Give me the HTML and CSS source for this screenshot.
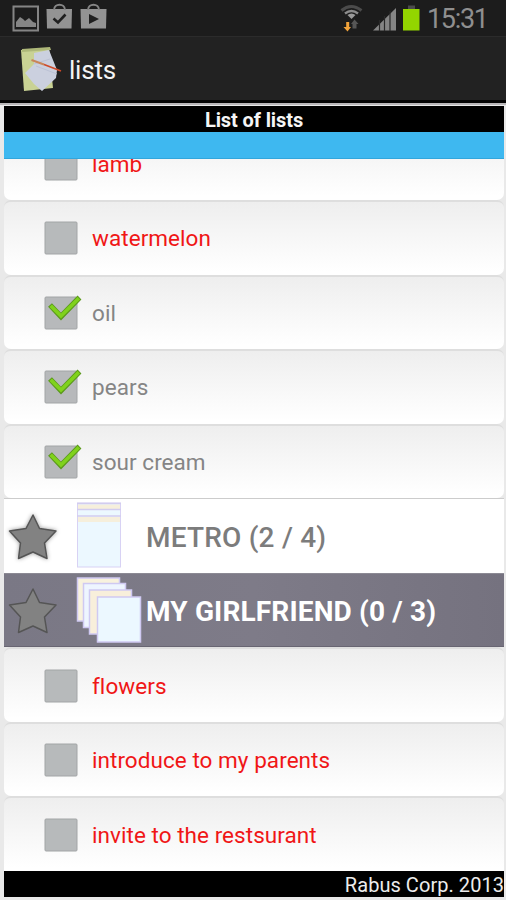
FILE: index.html
```
<!DOCTYPE html>
<html lang="en">
<head>
<meta charset="utf-8">
<title>lists</title>
<link rel="stylesheet" href="styles.css">
</head>
<body>
<svg class="defs" width="0" height="0">
  <defs>
    <symbol id="box" viewBox="0 0 40 40">
      <rect x="1" y="4" width="32" height="32" rx="1" fill="#b7babb" stroke="#a2a5a6"/>
    </symbol>
    <symbol id="checked" viewBox="0 0 40 40">
      <rect x="1" y="4" width="32" height="32" rx="1" fill="#b7b9bb" stroke="#a2a5a6"/>
      <path d="M6 12 L17 23.500 L35.500 4.500" fill="none" stroke="#5b9a1c" stroke-width="5.400"/>
      <path d="M6.700 12.700 L17 23 L34.800 5.200" fill="none" stroke="#80d21c" stroke-width="3.600"/>
    </symbol>
    <symbol id="star" viewBox="0 0 50 50">
      <path d="M29.500 4 L36 17.500 L52.500 20 L41 32 L43.500 47.500 L29.500 41 L15 47.500 L17 32 L6 20 L22.500 17.500 Z" transform="translate(-4.500 0)" fill="#828282" stroke="#555" stroke-width="1.500" stroke-linejoin="round"/>
    </symbol>
  </defs>
</svg>
<div class="screen">
  <header class="status">
    <svg width="80" height="36" viewBox="0 0 80 36">
      <path d="M13.500 6.500H38V30.500H13.500Z" fill="none" stroke="#858585" stroke-width="2"/>
      <path d="M16 27V22L20 17L23 19L25 21L29 18L33 22L36 23V27Z" fill="#858585"/>
      <path d="M46.500 9H72L71.500 28.500H47Z" fill="#939393"/>
      <path d="M54 10C54 3 65 3 65 10" fill="none" stroke="#858585" stroke-width="2"/>
      <path d="M53.500 18.500L58 22.500L65.500 14.500" fill="none" stroke="#202020" stroke-width="2.600"/>
    </svg>
    <svg width="28" height="36" viewBox="0 0 28 36">
      <path d="M.5 9H26.500L26 28.500H1Z" fill="#939393"/>
      <path d="M8 10C8 3 19 3 19 10" fill="none" stroke="#858585" stroke-width="2"/>
      <path d="M9 14L19 19L9 24Z" fill="#202020"/>
    </svg>
    <svg class="status-right" width="84" height="36" viewBox="0 0 84 36">
      <path d="M1.500 10.500Q11 2.500 21.500 10.500" fill="none" stroke="#4b4b4b" stroke-width="3"/>
      <path d="M5 13.500Q11.500 8.500 18 13.500" fill="none" stroke="#8c8c8c" stroke-width="2.500"/>
      <path d="M7.500 15Q11.500 12 15.500 15L11.500 19Z" fill="#9a9a9a"/>
      <path d="M6.200 22H9.200V27H11L7.500 31.500L3.500 27H6.200Z" fill="#f2a33a"/>
      <path d="M14.500 19.500L18.500 24H16.500V28.500H12.500V24H11Z" fill="#565656"/>
      <path d="M33 30.500L56 8V30.500Z" fill="#858585"/>
      <path d="M39.500 20V31M44.500 16V31M50 11V31" stroke="#292929" stroke-width="1.200"/>
      <path d="M68 5.500H75V9H68Z" fill="#4b4b4b"/>
      <path d="M63 9H79.500V30.500H63Z" fill="#93d500"/>
    </svg>
    <span class="clock">15:31</span>
  </header>
  <div class="appbar">
    <svg width="44" height="48" viewBox="0 0 44 48">
      <path d="M1 5L29 3L33 43L4 46Z" fill="#c9d294"/>
      <path d="M2 4L30 2L31 5L2 7Z" fill="#aeb879"/>
      <path d="M14 8L29 5L37 25L36 33L22 46L14 39L5 28L14 19Z" fill="#cbd0df"/>
      <path d="M14 19L30 14M16 21L37 29" stroke="#bcc2d5" fill="none"/>
      <path d="M11.500 15L24 19.500" stroke="#c98558" stroke-width="2"/>
      <path d="M24 19.500L41 26" stroke="#cf4a2a" stroke-width="1.800"/>
    </svg>
    <h1 class="app-title">lists</h1>
  </div>
  <main class="panel">
    <h2 class="caption">List of lists</h2>
    <div class="accent"></div>
    <div class="list">
      <div class="item todo"><svg class="check"><use href="#box"/></svg><span>lamb</span></div>
      <div class="item todo"><svg class="check"><use href="#box"/></svg><span>watermelon</span></div>
      <div class="item"><svg class="check"><use href="#checked"/></svg><span>oil</span></div>
      <div class="item"><svg class="check"><use href="#checked"/></svg><span>pears</span></div>
      <div class="item"><svg class="check"><use href="#checked"/></svg><span>sour cream</span></div>
      <div class="group">
        <svg class="star glow"><use href="#star"/></svg>
        <svg class="sheets" width="70" height="74" viewBox="0 0 70 74">
          <rect x="1.500" y="4" width="43" height="64" fill="#ecf8ff" stroke="#d8d2f4"/>
          <path d="M2 5.500H44V10H2Z M2 18H44V23H2Z" fill="#f6efdc"/>
          <path d="M1 4.500H45M1 10.500H45M1 17H45" stroke="#d2ccef" stroke-width="1.500"/>
        </svg>
        <span class="name partial">METRO (2 / 4)</span>
      </div>
      <div class="group active">
        <svg class="star"><use href="#star"/></svg>
        <svg class="sheets" width="70" height="74" viewBox="0 0 70 74">
          <g stroke="#cfc9f2" stroke-width="1.500">
            <rect x="1.500" y="5" width="42" height="43" fill="#f8f2de"/>
            <rect x="7.500" y="10.500" width="42" height="44" fill="#eef5ff"/>
            <rect x="13.500" y="17" width="42" height="44" fill="#f8efdb"/>
            <rect x="21.500" y="24" width="43" height="45" fill="#ecf8ff"/>
          </g>
        </svg>
        <span class="name">MY GIRLFRIEND (0 / 3)</span>
      </div>
      <div class="item todo"><svg class="check"><use href="#box"/></svg><span>flowers</span></div>
      <div class="item todo"><svg class="check"><use href="#box"/></svg><span>introduce to my parents</span></div>
      <div class="item todo last"><svg class="check"><use href="#box"/></svg><span>invite to the restsurant</span></div>
    </div>
    <footer class="footer">Rabus Corp. 2013</footer>
  </main>
</div>
</body>
</html>
```
FILE: styles.css
```
* { box-sizing: border-box; }
body { margin: 0; font-family: Roboto, "Liberation Sans", sans-serif; background: #ececec; }
h1, h2 { margin: 0; }
svg { display: block; flex: none; }
.defs { position: absolute; }
.screen { width: 506px; height: 900px; display: flex; flex-direction: column; overflow: hidden; }
.status { height: 36px; flex: none; background: #1c1c1c; display: flex; align-items: center; }
.status-right { margin-left: 232px; }
.clock { margin-left: 3px; font-size: 27px; line-height: 36px; padding-top: 1px; color: #8f8f8f; letter-spacing: -1.3px; }
.appbar { height: 67px; flex: none; background: #222; border-top: 1px solid #2b2b2b; border-bottom: 3px solid #040404; display: flex; align-items: center; padding-left: 20px; }
.app-title { margin-left: 5px; padding-top: 2px; font-size: 26px; font-weight: 400; color: #f4f4f4; letter-spacing: -0.2px; }
.panel { flex: 1; min-height: 0; padding: 1px 2px 3px 4px; border-top: 2px solid #b9b7b9; background: #e9e9e9; display: flex; flex-direction: column; }
.caption { height: 26px; flex: none; background: #000; color: #f5f5f5; font-size: 20px; line-height: 28px; text-align: center; letter-spacing: -0.1px; }
.accent { height: 27px; flex: none; background: #3eb8f0; border-bottom: 1px solid #32a6dc; }
.list { flex: 1; min-height: 0; overflow: hidden; display: flex; flex-direction: column; justify-content: flex-end; }
.item { height: 74.55px; flex: none; display: flex; align-items: center; padding-left: 40px; font-size: 22.5px; letter-spacing: 0.05px; color: #858585; background: linear-gradient(#eee, #fff 95%); border-radius: 7px; border-top: 2px solid #dedede; }
.todo { color: #f01616; }
.check { width: 40px; height: 40px; margin-right: 8px; }
.last { border-bottom-left-radius: 0; border-bottom-right-radius: 0; }
.group { height: 74.55px; flex: none; display: flex; align-items: center; background: #fff; border-top: 1px solid #ccc; color: #7c7c7c; }
.active { background: linear-gradient(90deg, #7a7885, #7e7b88 50%, #75727f); border-top-color: #8c8a94; border-bottom: 1px solid #686572; color: #fff; }
.name { padding-top: 3px; font-size: 28px; font-weight: 700; letter-spacing: 0.15px; }
.partial { font-weight: 500; letter-spacing: 0.2px; }
.star { width: 50px; height: 50px; margin-left: 4px; }
.glow { filter: drop-shadow(0 0 2px #999); }
.sheets { margin-left: 18px; }
.footer { height: 26px; flex: none; background: #000; color: #ececec; font-size: 20px; line-height: 29px; text-align: right; white-space: nowrap; letter-spacing: 0.05px; }
```
